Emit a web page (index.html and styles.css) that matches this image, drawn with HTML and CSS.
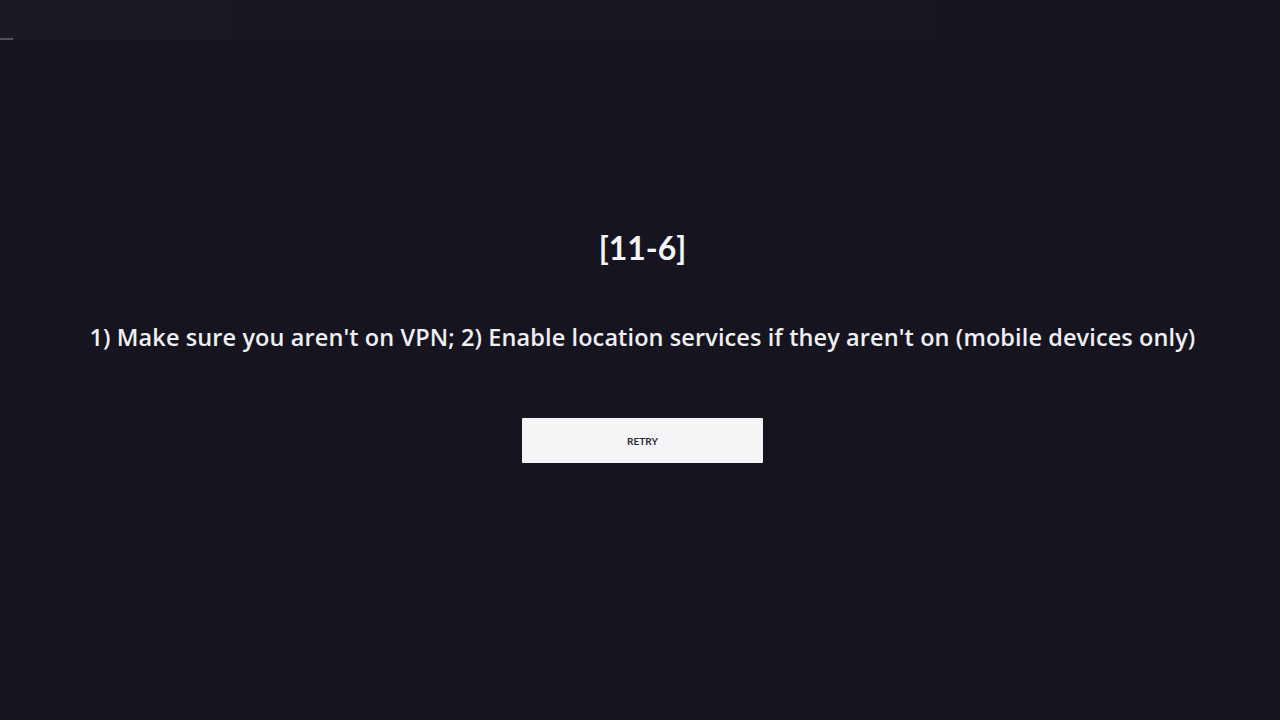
FILE: index.html
```html
<!DOCTYPE html>
<html lang="en">
<head>
  <meta charset="UTF-8" />
  <meta name="viewport" content="width=device-width, initial-scale=1.0" />
  <title>Error</title>
  <link rel="stylesheet" href="styles.css">
</head>
<body>
  <div class="topbar"><span class="tick"></span></div>
  <main class="error">
    <h1 class="code">[11-6]</h1>
    <p class="msg">1) Make sure you aren't on VPN; 2) Enable location services if they aren't on (mobile devices only)</p>
    <button type="button" class="retry">RETRY</button>
  </main>
</body>
</html>
```

FILE: styles.css
```css
html, body {
  margin: 0;
  height: 100%;
}
body {
  background: #16151f;
  font-family: 'Open Sans', 'Lato', Arial, sans-serif;
  color: #f4f4f6;
}
.topbar {
  height: 40px;
  background: linear-gradient(to right, #1a1924, #18171f 35%, #16151f);
}
.tick {
  display: block;
  width: 13px;
  height: 2px;
  background: #55535e;
  position: relative;
  top: 38px;
}
.error {
  display: flex;
  flex-direction: column;
  align-items: center;
  padding-left: 5px;
  padding-top: 188px;
}
.code {
  margin: 0;
  font-family: 'Lato', Arial, sans-serif;
  font-size: 32px;
  font-weight: 700;
  line-height: 40px;
}
.msg {
  margin: 54px 0 0;
  font-size: 23.5px;
  line-height: 30px;
  font-weight: 600;
  letter-spacing: 0.1px;
  color: #efeff2;
}
.retry {
  margin-top: 66px;
  width: 241px;
  height: 45px;
  background: #f5f5f7;
  color: #2b2a33;
  border: none;
  border-radius: 1px;
  font-family: 'Lato', Arial, sans-serif;
  font-weight: 700;
  font-size: 10px;
  cursor: pointer;
}
```
